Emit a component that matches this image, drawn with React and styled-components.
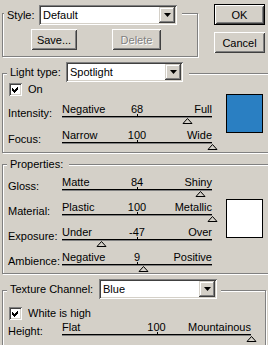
import React from "react";
import styled, { createGlobalStyle } from "styled-components";

const GlobalStyle = createGlobalStyle`
  html, body {
    margin: 0;
    padding: 0;
    background: #d4d0c8;
    overflow: hidden;
  }
  body {
    font-family: "Liberation Sans", Arial, sans-serif;
    font-size: 11px;
    color: #000;
  }
`;

const Dialog = styled.div`
  width: 268px;
  height: 345px;
  overflow: hidden;
  background: #d4d0c8;
`;

const TopRow = styled.div`
  display: flex;
  align-items: flex-start;
`;

const Group = styled.div`
  box-sizing: border-box;
  flex-shrink: 0;
  width: ${(p) => p.$w}px;
  height: ${(p) => p.$h}px;
  margin: ${(p) => p.$top}px 0 0 2px;
  border: 1px solid #808080;
  box-shadow: inset 1px 1px 0 #fff, 1px 1px 0 #fff;
`;

const GroupHeader = styled.div`
  display: flex;
  align-items: center;
  width: fit-content;
  height: ${(p) => p.$h}px;
  margin: -${(p) => p.$lift}px 0 0 ${(p) => p.$indent}px;
  padding: 0 ${(p) => p.$right}px 0 3px;
  background: #d4d0c8;
`;

const HeaderLabel = styled.span`
  width: ${(p) => (p.$w ? `${p.$w}px` : "auto")};
  line-height: 13px;
  white-space: nowrap;
`;

const Select = styled.div`
  box-sizing: border-box;
  width: ${(p) => p.$w}px;
  height: 20px;
  padding: 2px;
  display: flex;
  align-items: center;
  background: #fff;
  box-shadow: inset 1px 1px 0 #808080, inset -1px -1px 0 #fff,
    inset 2px 2px 0 #404040, inset -2px -2px 0 #d4d0c8;
`;

const SelectText = styled.span`
  flex: 1;
  padding-left: 2px;
  line-height: 16px;
  white-space: nowrap;
`;

const SelectButton = styled.div`
  box-sizing: border-box;
  width: 16px;
  height: 16px;
  display: flex;
  align-items: center;
  justify-content: center;
  background: #d4d0c8;
  box-shadow: inset -1px -1px 0 #404040, inset 1px 1px 0 #d4d0c8,
    inset -2px -2px 0 #808080, inset 2px 2px 0 #fff;
`;

const PushButton = styled.button`
  box-sizing: border-box;
  width: ${(p) => p.$w}px;
  height: 21px;
  margin: 0;
  padding: 0;
  font: 11px "Liberation Sans", Arial, sans-serif;
  color: ${(p) => (p.disabled ? "#808080" : "#000")};
  text-shadow: ${(p) => (p.disabled ? "1px 1px 0 #fff" : "none")};
  background: #d4d0c8;
  border: ${(p) => (p.$default ? "1px solid #000" : "none")};
  box-shadow: inset 1px 1px 0 #fff, inset -1px -1px 0 #404040,
    inset 2px 2px 0 #d4d0c8, inset -2px -2px 0 #808080;
`;

const StyleButtons = styled.div`
  display: flex;
  gap: 35px;
  margin-top: 4px;
  padding-left: 28px;
`;

const DialogButtons = styled.div`
  display: flex;
  flex-direction: column;
  gap: 7px;
  margin-left: 16px;
  padding-top: 4px;
`;

const GroupBody = styled.div`
  display: flex;
  padding-left: 5px;
`;

const Controls = styled.div`
  display: flex;
  flex-direction: column;
  padding-top: ${(p) => p.$pt || 0}px;
`;

const CheckRow = styled.div`
  display: flex;
  align-items: center;
  gap: 6px;
  height: 13px;
  margin: ${(p) => p.$mt}px 0 0 1px;
  line-height: 13px;
`;

const CheckBox = styled.div`
  box-sizing: border-box;
  width: 13px;
  height: 13px;
  background: #fff;
  box-shadow: inset 1px 1px 0 #808080, inset -1px -1px 0 #fff,
    inset 2px 2px 0 #404040, inset -2px -2px 0 #d4d0c8;
  svg {
    display: block;
  }
`;

const SliderRow = styled.div`
  display: flex;
  height: ${(p) => p.$h}px;
  margin-top: ${(p) => p.$mt || 0}px;
  flex-shrink: 0;
`;

const SliderLabel = styled.div`
  width: 54px;
  padding-top: 4px;
  line-height: 13px;
  white-space: nowrap;
`;

const Track = styled.div`
  width: ${(p) => p.$w}px;
`;

const TrackLabels = styled.div`
  display: grid;
  grid-template-columns: 1fr auto 1fr;
  height: 13px;
  line-height: 13px;
  white-space: nowrap;
  span:last-child {
    text-align: right;
  }
`;

const Rail = styled.div`
  position: relative;
  height: 0;
  border-top: 1px solid #000;
  border-bottom: 1px solid #808080;
  &::before {
    content: "";
    position: absolute;
    left: 50%;
    top: -3px;
    width: 1px;
    height: 2px;
    background: #000;
  }
`;

const Thumb = styled.svg`
  position: absolute;
  top: 1px;
  display: block;
`;

const Swatch = styled.div`
  box-sizing: border-box;
  flex-shrink: 0;
  width: 37px;
  height: 39px;
  margin: ${(p) => p.$mt}px 0 0 14px;
  border: 1px solid #000;
  background: ${(p) => p.$color};
`;

const ArrowDown = () => (
  <svg width="7" height="4" viewBox="0 0 7 4">
    <polygon points="0,0 7,0 3.5,4" fill="#000" />
  </svg>
);

const Check = () => (
  <CheckBox>
    <svg width="13" height="13" viewBox="0 0 13 13" shapeRendering="crispEdges">
      <polygon points="3,5 5,7 9,3 9,6 5,10 3,8" fill="#000" />
    </svg>
  </CheckBox>
);

const Dropdown = ({ width, value }) => (
  <Select $w={width}>
    <SelectText>{value}</SelectText>
    <SelectButton>
      <ArrowDown />
    </SelectButton>
  </Select>
);

const Slider = ({ label, left, right, value, min, max, width = 150, height = 25, mt }) => {
  const pct = ((value - min) / (max - min)) * 100;
  return (
    <SliderRow $h={height} $mt={mt}>
      <SliderLabel>{label}</SliderLabel>
      <Track $w={width}>
        <TrackLabels>
          <span>{left}</span>
          <span>{value}</span>
          <span>{right}</span>
        </TrackLabels>
        <Rail>
          <Thumb
            width="11"
            height="7"
            viewBox="0 0 11 7"
            style={{ left: `calc(${pct}% - 5.5px)` }}
          >
            <polygon
              points="5.5,0.5 10,5.5 1,5.5"
              fill="#d4d0c8"
              stroke="#000"
              strokeWidth="1"
            />
          </Thumb>
        </Rail>
      </Track>
    </SliderRow>
  );
};

const App = () => {
  return (
    <Dialog>
      <GlobalStyle />
      <TopRow>
        <Group $w={196} $h={44} $top={13}>
          <GroupHeader $h={20} $lift={9} $indent={1} $right={5}>
            <HeaderLabel $w={32}>Style:</HeaderLabel>
            <Dropdown width={138} value="Default" />
          </GroupHeader>
          <StyleButtons>
            <PushButton $w={46}>Save...</PushButton>
            <PushButton $w={49} disabled>
              Delete
            </PushButton>
          </StyleButtons>
        </Group>
        <DialogButtons>
          <PushButton $w={51} $default>
            OK
          </PushButton>
          <PushButton $w={51}>Cancel</PushButton>
        </DialogButtons>
      </TopRow>

      <Group $w={290} $h={80} $top={16}>
        <GroupHeader $h={20} $lift={12} $indent={4} $right={6}>
          <HeaderLabel $w={56}>Light type:</HeaderLabel>
          <Dropdown width={117} value="Spotlight" />
        </GroupHeader>
        <GroupBody>
          <Controls>
            <CheckRow $mt={1}>
              <Check />
              <span>On</span>
            </CheckRow>
            <Slider label="Intensity:" left="Negative" right="Full" value={68} min={-100} max={100} height={26} mt={7} />
            <Slider label="Focus:" left="Narrow" right="Wide" value={100} min={-100} max={100} height={26} />
          </Controls>
          <Swatch $mt={12} $color="#2a7fc2" />
        </GroupBody>
      </Group>

      <Group $w={290} $h={110} $top={11}>
        <GroupHeader $h={13} $lift={7} $indent={4} $right={6}>
          <HeaderLabel>Properties:</HeaderLabel>
        </GroupHeader>
        <GroupBody>
          <Controls $pt={5}>
            <Slider label="Gloss:" left="Matte" right="Shiny" value={84} min={-100} max={100} />
            <Slider label="Material:" left="Plastic" right="Metallic" value={100} min={-100} max={100} />
            <Slider label="Exposure:" left="Under" right="Over" value={-47} min={-100} max={100} />
            <Slider label="Ambience:" left="Negative" right="Positive" value={9} min={-100} max={100} />
          </Controls>
          <Swatch $mt={28} $color="#fff" />
        </GroupBody>
      </Group>

      <Group $w={264} $h={70} $top={16}>
        <GroupHeader $h={20} $lift={12} $indent={4} $right={4}>
          <HeaderLabel $w={89}>Texture Channel:</HeaderLabel>
          <Dropdown width={118} value="Blue" />
        </GroupHeader>
        <GroupBody>
          <Controls>
            <CheckRow $mt={8}>
              <Check />
              <span>White is high</span>
            </CheckRow>
            <Slider label="Height:" left="Flat" right="Mountainous" value={100} min={0} max={100} width={189} mt={1} />
          </Controls>
        </GroupBody>
      </Group>
    </Dialog>
  );
};

export default App;
